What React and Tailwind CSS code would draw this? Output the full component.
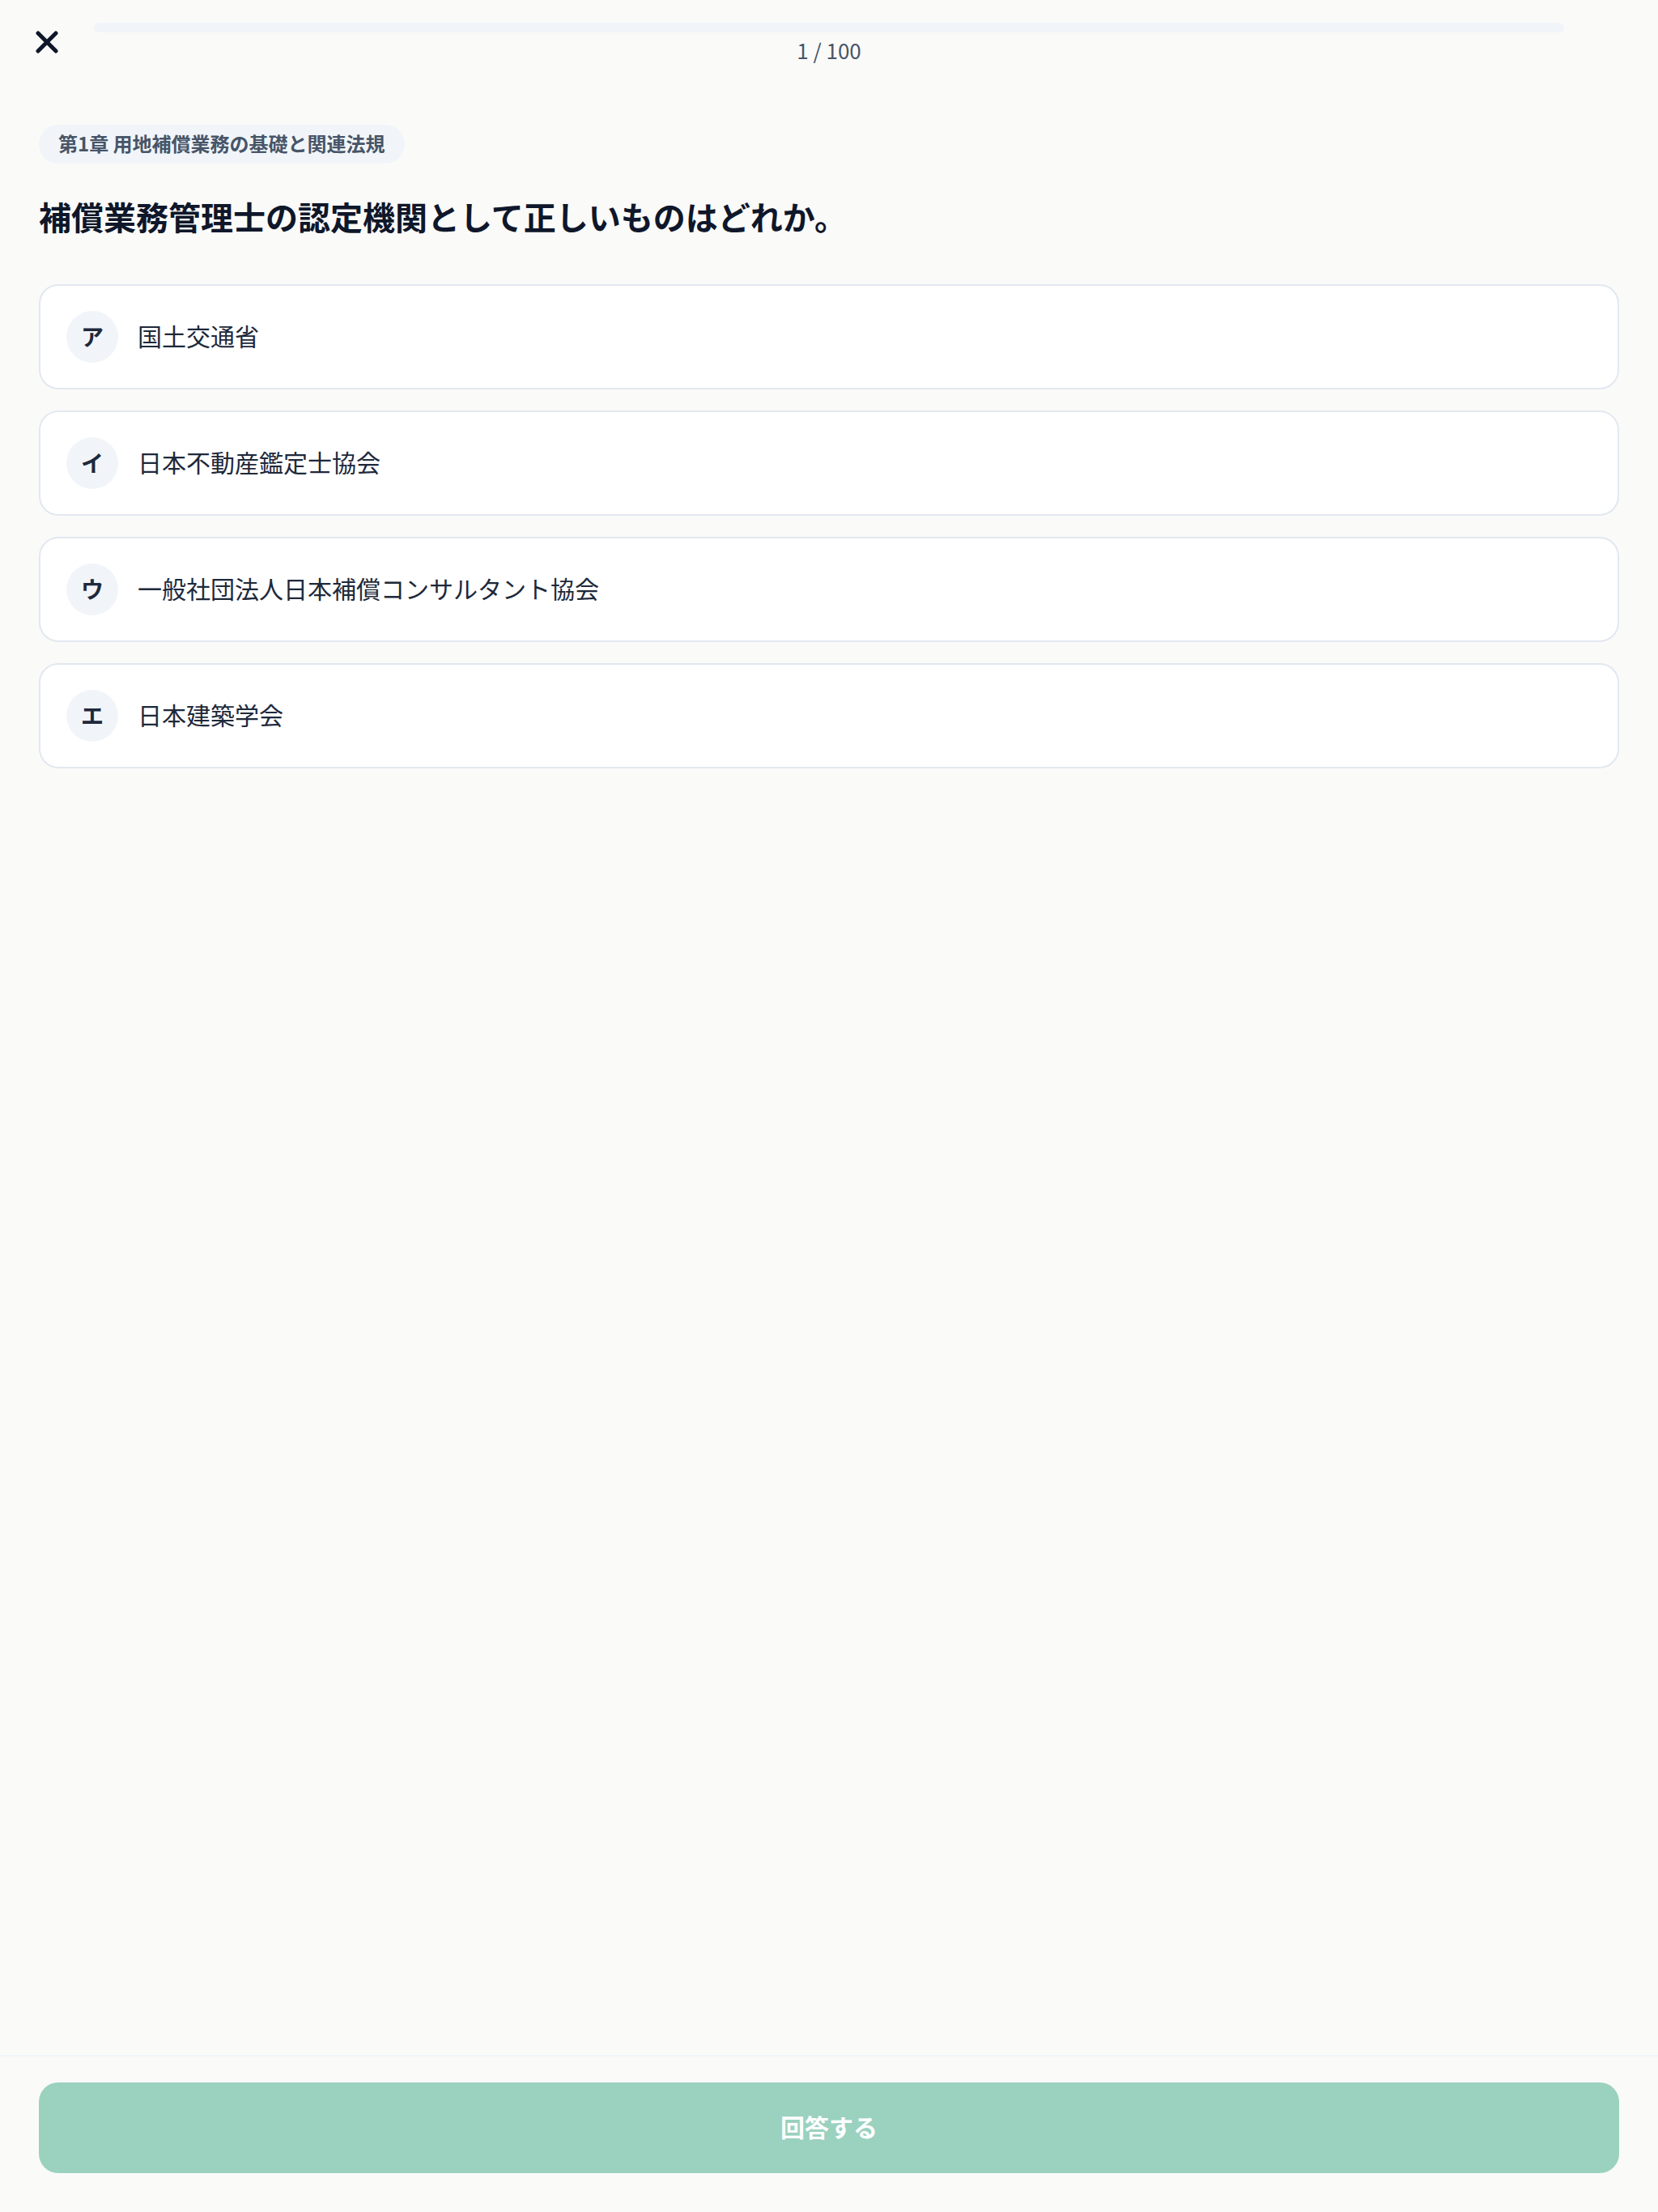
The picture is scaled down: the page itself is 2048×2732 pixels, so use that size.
import React from "react";

// --- QUIZ QUESTION SCREEN ---
const choices = [
  { key: "ア", label: "国土交通省" },
  { key: "イ", label: "日本不動産鑑定士協会" },
  { key: "ウ", label: "一般社団法人日本補償コンサルタント協会" },
  { key: "エ", label: "日本建築学会" },
];

const CloseIcon = () => (
  <svg width="28" height="28" viewBox="0 0 28 28" fill="none">
    <path d="M3 3 L25 25 M25 3 L3 25" stroke="#0f172a" strokeWidth="5" strokeLinecap="round" />
  </svg>
);

const App = () => {
  return (
    <div
      className="h-screen w-full bg-[#fafaf9] flex flex-col overflow-hidden"
      style={{ fontFamily: '"Noto Sans CJK JP", "Noto Sans", sans-serif' }}
    >
      {/* HEADER */}
      <div className="flex items-start gap-[44px] px-[44px] pt-[28px]">
        <button className="w-[28px] h-[28px] mt-[10px] flex items-center justify-center">
          <CloseIcon />
        </button>
        <div className="flex-1 flex flex-col items-center">
          <div className="w-full h-[12px] rounded-full bg-[#f1f5f9]" />
          <span className="mt-[4px] text-[26px] leading-[36px] text-[#475569]">1 / 100</span>
        </div>
        <div className="w-[28px]" />
      </div>

      {/* CONTENT */}
      <div className="flex-1 px-[48px]">
        <div className="mt-[74px] inline-flex h-[48px] items-center px-[24px] pb-[2px] rounded-full bg-[#f1f5f9] text-[24px] font-bold text-[#475569]">
          第1章 用地補償業務の基礎と関連法規
        </div>

        <h1 className="mt-[37px] text-[40px] leading-[56px] font-bold text-[#0f172a]">
          補償業務管理士の認定機関として正しいものはどれか。
        </h1>

        <div className="mt-[56px] flex flex-col gap-[26px]">
          {choices.map((c) => (
            <button
              key={c.key}
              className="h-[130px] w-full flex items-center gap-[24px] px-[32px] bg-white border-2 border-[#e2e8f0] rounded-[24px] text-left"
            >
              <span className="w-[64px] h-[64px] pb-[3px] rounded-full bg-[#f1f5f9] flex items-center justify-center text-[28px] font-bold text-[#1e293b]">
                {c.key}
              </span>
              <span className="pb-[4px] text-[30px] text-[#1e293b]">{c.label}</span>
            </button>
          ))}
        </div>
      </div>

      {/* FOOTER */}
      <div className="border-t-2 border-[#f1f5f9] px-[48px] pt-[32px] pb-[48px]">
        <button className="w-full h-[112px] pb-[3px] rounded-[24px] bg-[#9ad1bf] text-white text-[30px] font-bold">
          回答する
        </button>
      </div>
    </div>
  );
};

export default App;
